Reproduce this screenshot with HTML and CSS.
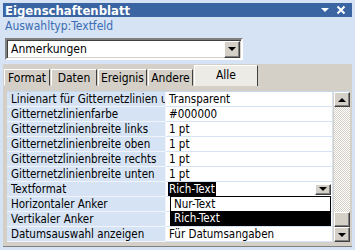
FILE: index.html
```html
<!DOCTYPE html>
<html lang="de">
<head>
    <meta charset="UTF-8">
    <title>Eigenschaftenblatt</title>
    <link rel="stylesheet" href="styles.css">
</head>
<body>
    <div class="window">
        <div class="titlebar">
            <span class="title">Eigenschaftenblatt</span>
            <svg class="tb-icon" width="10" height="10" viewBox="0 0 10 10"><path d="M1 3h8L5 7z" fill="#fff"/></svg>
            <svg class="tb-icon" width="10" height="10" viewBox="0 0 10 10"><path d="M1.5 1.5l7 7M8.5 1.5l-7 7" stroke="#fff" stroke-width="2"/></svg>
        </div>
        <div class="subtitle">Auswahltyp:Textfeld</div>

        <div class="combo">
            <span class="combo-text">Anmerkungen</span>
            <span class="btn combo-btn"><i class="arrow-down"></i></span>
        </div>

        <div class="sheet">
            <div class="tabs">
                <span class="tab tab-format">Format</span>
                <span class="tab tab-daten">Daten</span>
                <span class="tab tab-ereignis">Ereignis</span>
                <span class="tab tab-andere">Andere</span>
                <span class="tab active">Alle</span>
            </div>
            <div class="panel">
                <div class="grid">
                    <div class="rows">
                        <div class="row"><span class="label">Linienart für Gitternetzlinien unten</span><span class="value">Transparent</span></div>
                        <div class="row"><span class="label">Gitternetzlinienfarbe</span><span class="value">#000000</span></div>
                        <div class="row"><span class="label">Gitternetzlinienbreite links</span><span class="value">1 pt</span></div>
                        <div class="row"><span class="label">Gitternetzlinienbreite oben</span><span class="value">1 pt</span></div>
                        <div class="row"><span class="label">Gitternetzlinienbreite rechts</span><span class="value">1 pt</span></div>
                        <div class="row"><span class="label">Gitternetzlinienbreite unten</span><span class="value">1 pt</span></div>
                        <div class="row"><span class="label">Textformat</span><span class="value editing"><span class="sel">Rich-Text</span><span class="btn small-btn"><i class="arrow-down"></i></span></span></div>
                        <div class="row"><span class="label">Horizontaler Anker</span><span class="value"></span></div>
                        <div class="row"><span class="label">Vertikaler Anker</span><span class="value"></span></div>
                        <div class="row"><span class="label">Datumsauswahl anzeigen</span><span class="value">Für Datumsangaben</span></div>

                        <div class="dropdown">
                            <div class="option">Nur-Text</div>
                            <div class="option picked">Rich-Text</div>
                        </div>
                    </div>
                    <div class="scrollbar">
                        <span class="btn sb-btn"><i class="arrow-up"></i></span>
                        <span class="track"></span>
                        <span class="btn thumb"></span>
                        <span class="btn sb-btn"><i class="arrow-down"></i></span>
                    </div>
                </div>
            </div>
        </div>
    </div>
</body>
</html>
```

FILE: styles.css
```css
body {
    margin: 0;
    background: #d5e3f4;
    font-family: "DejaVu Sans Condensed", "DejaVu Sans", sans-serif;
    font-size: 11.5px;
    color: #000;
}
.window {
    width: 349px;
    height: 244px;
    padding: 3px 3px 0 3px;
    display: flex;
    flex-direction: column;
}
.titlebar {
    height: 14px;
    background: #3a64a2;
    color: white;
    display: flex;
    align-items: center;
    padding: 0 6px 0 2px;
    gap: 6px;
}
.title {
    font-weight: bold;
    font-size: 13px;
    flex: 1;
}
.subtitle {
    color: #3b6cb3;
    font-size: 12px;
    padding: 2px 2px 0;
    height: 16px;
}
.combo {
    margin: 3px 0 0 2px;
    width: 230px;
    height: 18px;
    background: white;
    border: 2px solid;
    border-color: #808080 #fff #fff #808080;
    box-shadow: inset 1px 1px #404040, inset -1px -1px #d4d0c8;
    display: flex;
    align-items: center;
    padding-left: 4px;
    font-size: 12px;
}
.combo-text {
    flex: 1;
}
.btn {
    background: #d4d0c8;
    border: 1px solid;
    border-color: #fff #404040 #404040 #fff;
    box-shadow: inset -1px -1px #808080;
    display: flex;
    align-items: center;
    justify-content: center;
    box-sizing: border-box;
}
.combo-btn {
    width: 16px;
    height: 17px;
    margin-right: 1px;
}
.arrow-down {
    border-left: 4px solid transparent;
    border-right: 4px solid transparent;
    border-top: 4px solid #000;
}
.arrow-up {
    border-left: 4px solid transparent;
    border-right: 4px solid transparent;
    border-bottom: 4px solid #000;
}
.sheet {
    margin-top: 4px;
    background: #d4d0c8;
    flex: 1;
    display: flex;
    flex-direction: column;
    border-bottom: 1px solid #808080;
}
.tabs {
    display: flex;
    height: 22px;
    padding-left: 1px;
    align-items: flex-end;
}
.tab {
    height: 17px;
    border: 1px solid;
    border-color: #fff #404040 transparent #fff;
    margin-right: 1px;
    display: flex;
    align-items: center;
    justify-content: center;
    box-sizing: border-box;
    font-size: 12px;
}
.tab-format { width: 46px; }
.tab-daten { width: 46px; }
.tab-ereignis { width: 49px; }
.tab-andere { width: 45px; }
.tab.active {
    width: 64px;
    height: 21px;
    background: #ecebe6;
    align-items: flex-start;
    padding-top: 2px;
    border-bottom: none;
}
.panel {
    flex: 1;
    padding: 5px 2px 4px 4px;
    background: #d4d0c8;
}
.grid {
    display: flex;
    border-top: 1px solid #c6d7ee;
}
.rows {
    position: relative;
    flex: 1;
}
.row {
    display: grid;
    grid-template-columns: 159px 1fr;
    height: 15px;
}
.label {
    background: #d5e3f4;
    border-bottom: 1px solid #f1f5fb;
    border-right: 1px solid #f1f5fb;
    padding-left: 4px;
    white-space: nowrap;
    overflow: hidden;
    line-height: 14px;
}
.value {
    background: white;
    border-bottom: 1px solid #d5e3f4;
    border-right: 1px solid #d5e3f4;
    padding-left: 3px;
    line-height: 14px;
    white-space: nowrap;
    overflow: hidden;
}
.value.editing {
    display: flex;
    align-items: center;
    padding-left: 2px;
}
.sel {
    background: #000;
    color: #fff;
    flex: none;
    padding: 0 1px;
    margin-right: auto;
}
.small-btn {
    width: 16px;
    height: 11px;
    margin-right: 1px;
}
.dropdown {
    position: absolute;
    left: 163px;
    top: 104px;
    width: 159px;
    background: white;
    border: 1px solid #000;
}
.option {
    height: 14px;
    line-height: 14px;
    padding-left: 3px;
}
.option.picked {
    background: #000;
    color: #fff;
}
.scrollbar {
    width: 16px;
    display: flex;
    flex-direction: column;
    margin-left: 1px;
    height: 150px;
}
.sb-btn, .thumb {
    width: 16px;
    height: 15px;
}
.track {
    flex: 1;
    background: repeating-conic-gradient(#d4d0c8 0 25%, #fff 0 50%) 0 0 / 2px 2px;
}
```
